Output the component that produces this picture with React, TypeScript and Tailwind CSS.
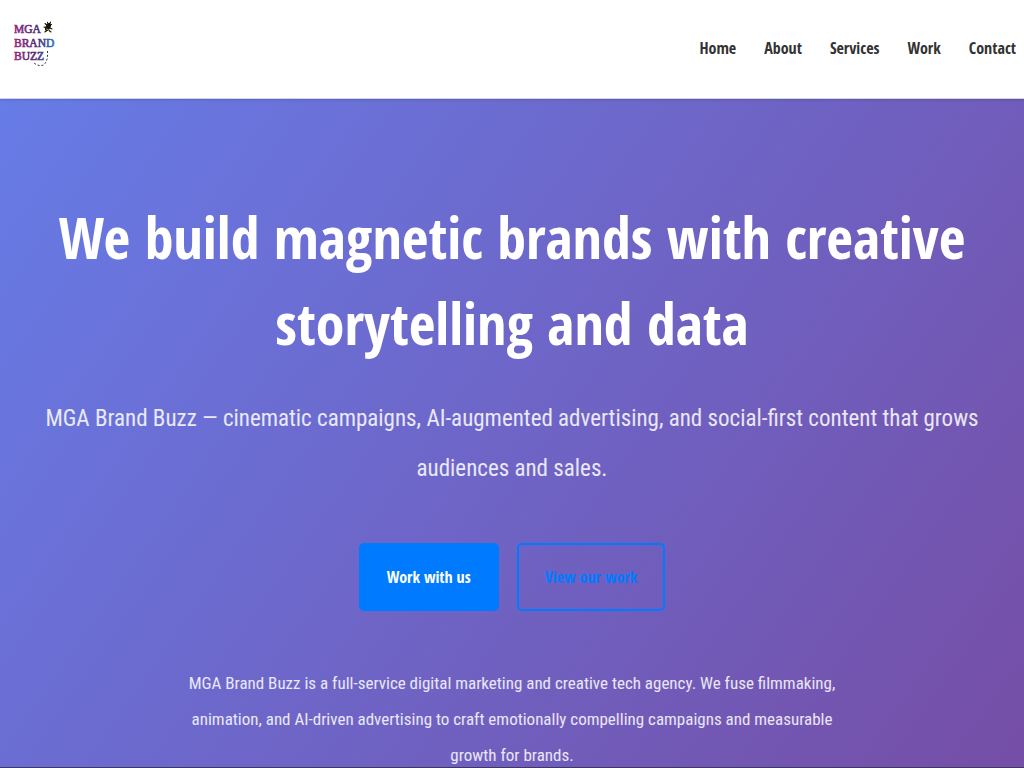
const navLinks = [
  { label: "Home", href: "#home" },
  { label: "About", href: "#about" },
  { label: "Services", href: "#services" },
  { label: "Work", href: "#work" },
  { label: "Contact", href: "#contact" },
]

function Logo() {
  return (
    <svg viewBox="0 0 44 48" className="w-11 h-12" role="img" aria-label="MGA Brand Buzz">
      <defs>
        <linearGradient id="logo-ink" gradientUnits="userSpaceOnUse" x1="0" y1="0" x2="40" y2="0">
          <stop offset="0" stopColor="#97297f" />
          <stop offset="0.55" stopColor="#4d2c74" />
          <stop offset="1" stopColor="#2f6fc0" />
        </linearGradient>
      </defs>
      <g fill="url(#logo-ink)" stroke="url(#logo-ink)" strokeWidth="0.6" fontFamily="'Liberation Serif', serif" fontSize="11.5">
        <text x="0" y="13">MGA</text>
        <text x="0" y="27">BRAND</text>
        <text x="0" y="40">BUZZ</text>
      </g>
      {/* Bee */}
      <g fill="#16130f" stroke="#16130f" strokeLinecap="round">
        <ellipse cx="34" cy="7" rx="2" ry="3.8" transform="rotate(25 34 7)" />
        <path d="M34 6 31 3.5M35 5.5 37.5 4.5M32 8 30 7M36 8 38 9M33 10.5 30.8 12M35 10.5 37 12M35.5 4 36.500 2.200M34 4 33.400 2.200" strokeWidth="1.1" />
        <path d="M32.6 9 34.6 10" stroke="#c9a227" strokeWidth="1" />
      </g>
      {/* Flight trail */}
      <path d="M33.5 31C34 37 33 44 28 45.500 25 46.200 22 44.500 20 43" fill="none" stroke="#333" strokeWidth="1" strokeDasharray="2 1.800" />
    </svg>
  )
}

function Header() {
  return (
    <header className="relative z-10 shrink-0 flex items-center justify-between bg-white border-b border-gray-300 pl-3.5 pr-2 pt-5 pb-[22px] shadow-sm">
      <a href="#home" className="h-14 flex items-start">
        <Logo />
      </a>
      <nav className="flex gap-7 text-base leading-6 font-semibold text-[#333]">
        {navLinks.map(link => (
          <a key={link.href} href={link.href}>{link.label}</a>
        ))}
      </nav>
    </header>
  )
}

function Hero() {
  return (
    <section className="flex-1 flex flex-col items-center px-8 pt-[95px] text-center text-white bg-[linear-gradient(125deg,#667eea_-5%,#764ba2_106%)]">
      <h1 className="text-[58px] leading-[86px] font-bold">
        We build magnetic brands with creative storytelling and data
      </h1>
      <p className="mt-7 text-[23px] leading-[50px] font-['Roboto_Condensed','Roboto',sans-serif] text-white/85">
        MGA Brand Buzz — cinematic campaigns, AI-augmented advertising, and social-first content that grows audiences and sales.
      </p>
      <div className="mt-[49px] flex gap-[18px] text-base leading-6 font-semibold">
        <button type="button" className="rounded-[5px] border-2 border-[#007bff] bg-[#007bff] px-[26px] py-5">
          Work with us
        </button>
        <button type="button" className="rounded-[5px] border-2 border-[#007bff] px-[26px] py-5 text-[#007bff]">
          View our work
        </button>
      </div>
      <p className="mt-[54px] max-w-[670px] text-[17px] leading-9 font-['Roboto_Condensed','Roboto',sans-serif] text-white/85">
        MGA Brand Buzz is a full-service digital marketing and creative tech agency. We fuse filmmaking, animation, and AI-driven advertising to craft emotionally compelling campaigns and measurable growth for brands.
      </p>
    </section>
  )
}

export default function App() {
  return (
    <div className="h-screen flex flex-col overflow-hidden border-b border-[#3d3a5c] font-['Open_Sans_Condensed','Open_Sans',sans-serif]">
      <Header />
      <Hero />
    </div>
  )
}
